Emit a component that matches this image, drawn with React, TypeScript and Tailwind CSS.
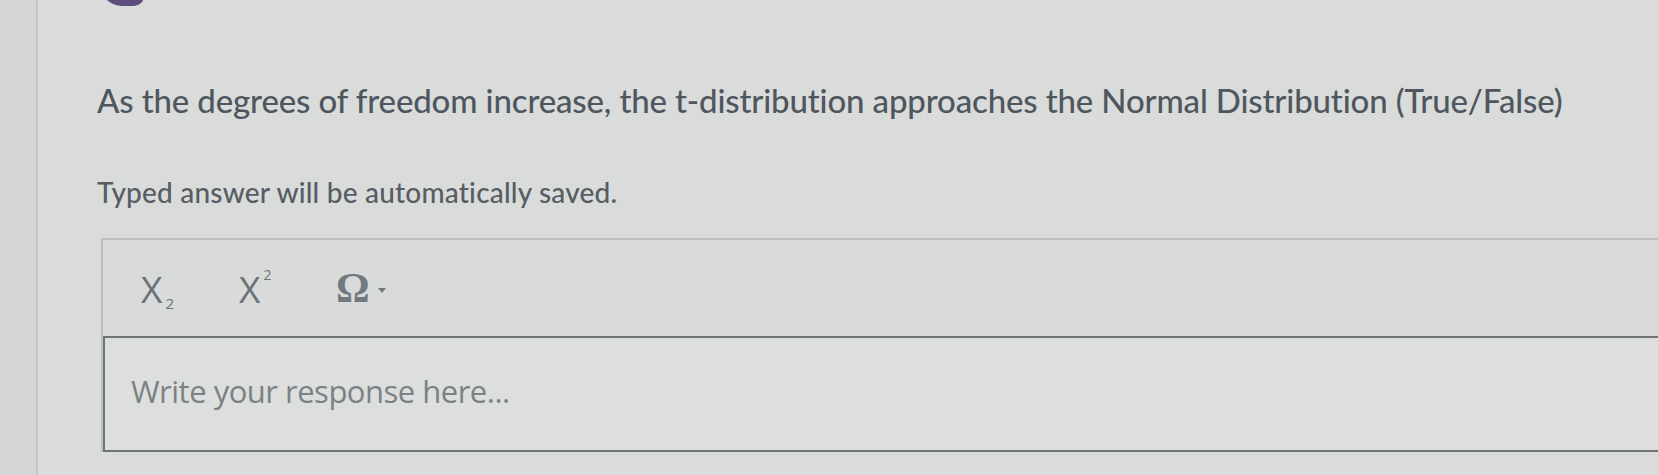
import React from 'react';

// ============================================
// Question Card (screenshot recreation)
// ============================================

const Subscript: React.FC = () => (
  <span className="inline-flex w-[98px] items-end leading-none">
    <span className="text-[37px]">X</span>
    <span className="text-[15px] ml-[3px] mb-[-4px]">2</span>
  </span>
);

const Superscript: React.FC = () => (
  <span className="inline-flex w-[97px] items-start leading-none">
    <span className="text-[37px]">X</span>
    <span className="text-[14px] ml-[3px] mt-[-2px]">2</span>
  </span>
);

const SpecialChar: React.FC = () => (
  <span className="inline-flex items-center gap-[8px] leading-none">
    <span className="text-[42px] font-bold font-['Liberation_Serif',serif] text-[#737a7e]">Ω</span>
    <svg width="8" height="5" viewBox="0 0 8 5" className="mt-[4px]">
      <path d="M0 0h8L4 5z" fill="#747a7e" />
    </svg>
  </span>
);

const App: React.FC = () => {
  return (
    <div className="flex h-[475px] w-full overflow-hidden bg-[#d9dcdb] font-['Lato',sans-serif]">
      {/* left rail */}
      <div className="w-[38px] shrink-0 bg-[#d3d6d5] border-r-2 border-[#c3c6c5]" />

      <div className="relative flex-1 pl-[59px]">
        {/* bottom of a purple badge peeking in from above */}
        <div className="absolute left-[62px] top-[-34px] w-[44px] h-[40px] rounded-bl-[22px] rounded-br-[10px] bg-[#5d4d7c]" />

        <h1 className="pt-[80px] text-[33px] leading-[40px] font-medium text-[#50565e] tracking-[-0.15px] whitespace-nowrap">
          As the degrees of freedom increase, the t-distribution approaches the Normal Distribution (True/False)
        </h1>

        <p className="mt-[57px] text-[28px] leading-[30px] font-medium text-[#585d63] tracking-[0.2px]">
          Typed answer will be automatically saved.
        </p>

        <div className="mt-[31px] ml-[4px] border-t-2 border-l-2 border-[#bdc0bf] bg-[#d8dbda]">
          <div className="h-[96px] flex items-center pl-[38px] text-[#6c7277] font-['Open_Sans',sans-serif]">
            <Subscript />
            <Superscript />
            <SpecialChar />
          </div>
          <div className="h-[116px] border-2 border-r-0 border-[#6e7472] bg-[#dcdfde] pl-[26px] pt-[38px]">
            <span className="font-['Open_Sans',sans-serif] text-[31px] leading-none text-[#7c8184] tracking-[-0.5px]">
              Write your response here...
            </span>
          </div>
        </div>
      </div>
    </div>
  );
};

export default App;
